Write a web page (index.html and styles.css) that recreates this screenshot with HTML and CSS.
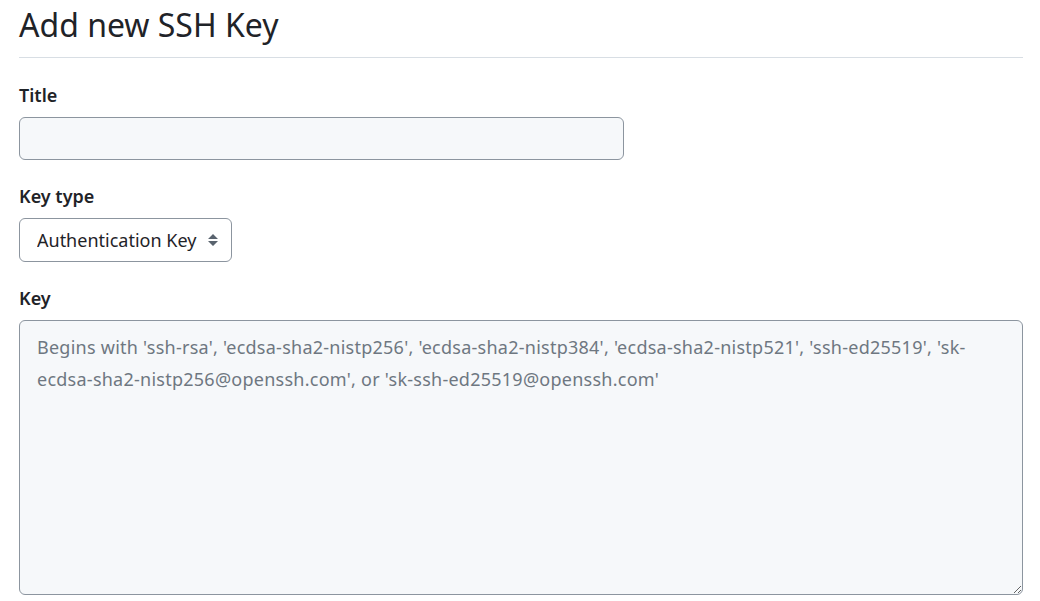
FILE: index.html
```html
<!DOCTYPE html>
<html lang="en">
<head>
<meta charset="utf-8">
<title>Add new SSH Key</title>
<link rel="stylesheet" href="styles.css">
</head>
<body>
<div class="page">
  <div class="subhead">
    <h2 class="subhead-heading">Add new SSH Key</h2>
  </div>
  <form class="form">
    <div class="form-group">
      <label class="label" for="title">Title</label>
      <input class="input input-title" id="title" type="text">
    </div>
    <div class="form-group">
      <label class="label" for="type">Key type</label>
      <div class="select-wrap">
        <select class="select" id="type">
          <option>Authentication Key</option>
          <option>Signing Key</option>
        </select>
        <svg class="select-icon" width="16" height="16" viewBox="0 0 16 16"><path d="M3 7 8 2l5 5z M3 9l5 5 5-5z" fill="#59636e"/></svg>
      </div>
    </div>
    <div class="form-group">
      <label class="label" for="key">Key</label>
      <textarea class="input textarea" id="key" placeholder="Begins with 'ssh-rsa', 'ecdsa-sha2-nistp256', 'ecdsa-sha2-nistp384', 'ecdsa-sha2-nistp521', 'ssh-ed25519', 'sk-ecdsa-sha2-nistp256@openssh.com', or 'sk-ssh-ed25519@openssh.com'"></textarea>
    </div>
  </form>
</div>
</body>
</html>
```
FILE: styles.css
```css
* { box-sizing: border-box; }
html, body { margin: 0; padding: 0; background: #fff; }
body {
  font-family: "Noto Sans", "Open Sans", sans-serif;
  color: #1f2328;
  font-size: 18px;
}
.page {
  padding: 0 17px 0 19px;
}
.subhead {
  border-bottom: 1px solid #d8dee4;
  padding: 3px 0 11px;
}
.subhead-heading {
  margin: 0;
  font-size: 32px;
  font-weight: 400;
  line-height: 43px;
}
.form { padding-top: 25px; }
.form-group { margin-bottom: 24px; }
.label {
  display: block;
  font-weight: 600;
  font-size: 18px;
  line-height: 24px;
  margin-bottom: 10px;
}
.input {
  display: block;
  font-family: inherit;
  font-size: 18px;
  color: #1f2328;
  background: #f6f8fa;
  border: 1px solid #8c959f;
  border-radius: 6px;
  padding: 8px 17px;
  outline: none;
}
.input-title { width: 605px; height: 43px; }
.select-wrap { position: relative; display: inline-block; vertical-align: top; }
.select {
  display: block;
  -webkit-appearance: none;
  appearance: none;
  font-family: inherit;
  font-size: 18px;
  color: #1f2328;
  background: #fff;
  border: 1px solid #8c959f;
  border-radius: 6px;
  height: 44px;
  width: 213px;
  padding: 0 30px 0 17px;
}
.select-icon {
  position: absolute;
  right: 11px;
  top: 14px;
  pointer-events: none;
}
.textarea {
  width: 100%;
  height: 275px;
  resize: vertical;
  line-height: 32px;
  padding: 10px 17px;
  letter-spacing: 0.25px;
}
.textarea::placeholder { color: #6e7781; opacity: 1; }
```
